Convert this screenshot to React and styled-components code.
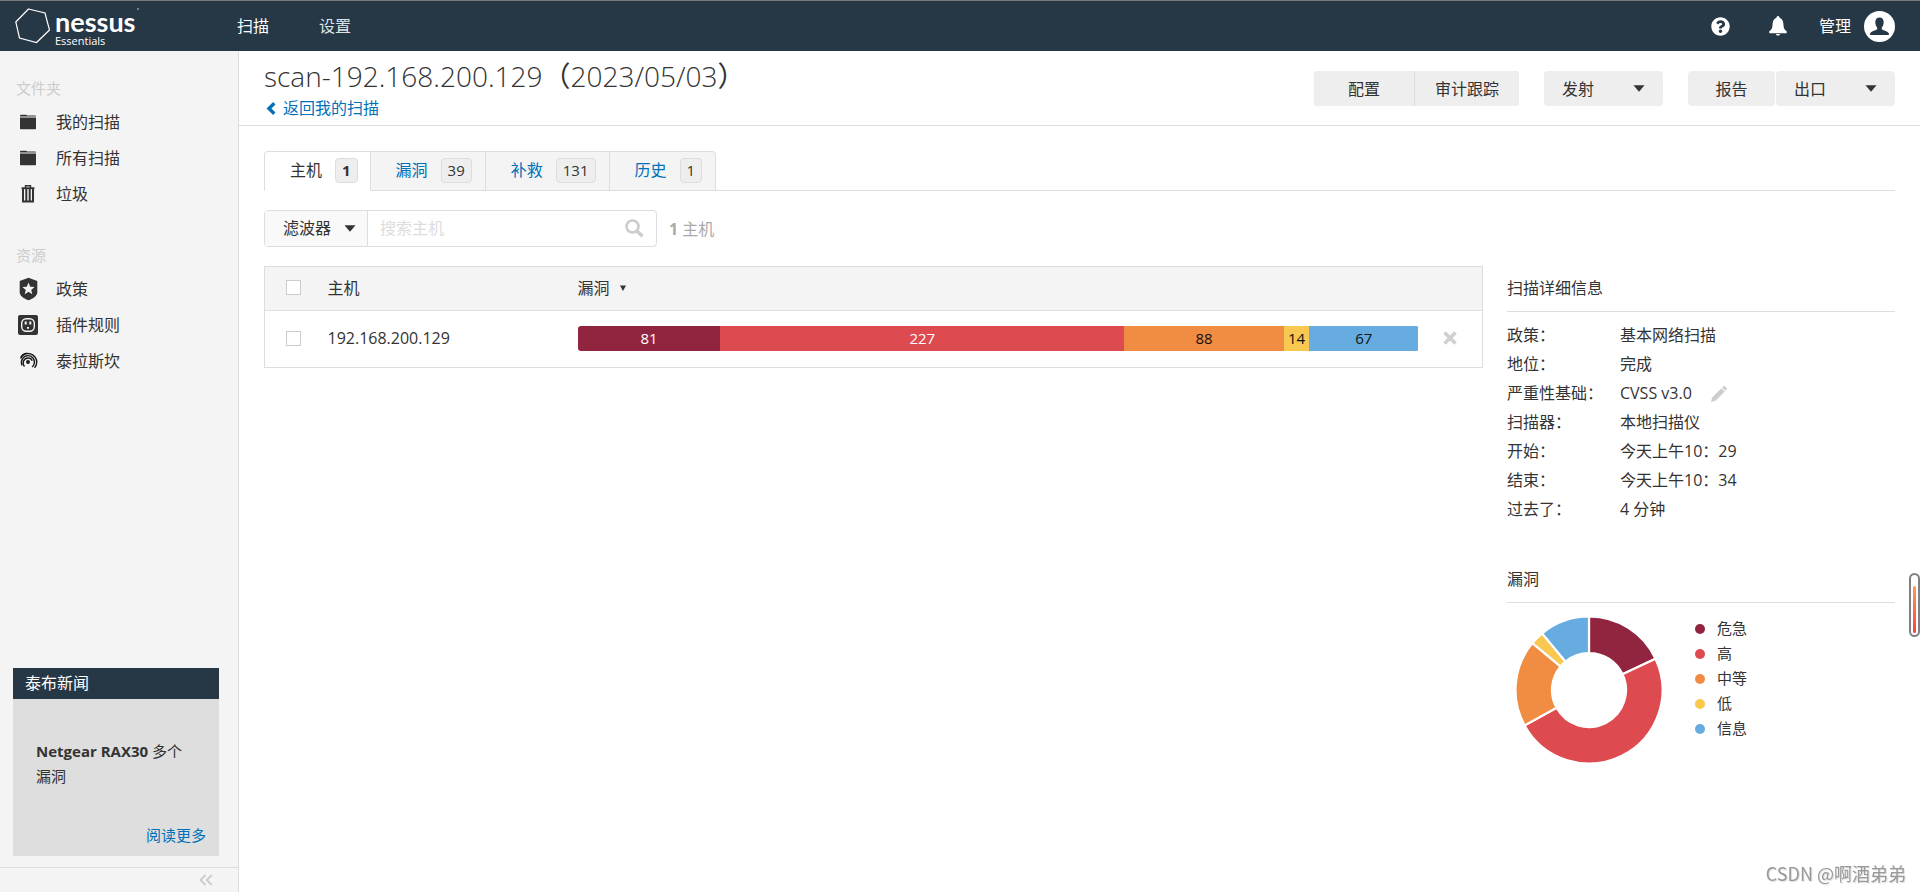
import React from "react";
import styled, { createGlobalStyle, css } from "styled-components";
import { FaQuestionCircle } from "react-icons/fa";

const colors = {
  navy: "#263746",
  text: "#333",
  link: "#0071b9",
  line: "#ddd",
  panel: "#f4f4f4",
  button: "#eee",
  muted: "#ccc",
};

const GlobalStyle = createGlobalStyle`
  *, *::before, *::after { box-sizing: border-box; }
  body {
    margin: 0;
    background: #fff;
    color: ${colors.text};
    font: 16px/24px "Open Sans", "Noto Sans CJK SC", sans-serif;
  }
  button, input { font: inherit; color: inherit; }
  button { cursor: pointer; }
  a { color: ${colors.link}; text-decoration: none; }
  h1, h2, p, dl, dd, ul { margin: 0; padding: 0; font-weight: 400; }
  ul { list-style: none; }
  svg { display: block; flex: none; }
`;

const Page = styled.div`
  display: flex;
  flex-direction: column;
  min-height: 100vh;
`;

/* ---------- top bar ---------- */

const TopBar = styled.header`
  display: flex;
  align-items: center;
  height: 51px;
  padding: 0 25px 0 15px;
  border-top: 1px solid #777;
  background: ${colors.navy};
  color: #fff;
`;

const Brand = styled.a`
  display: flex;
  align-items: center;
  gap: 4px;
  width: 222px;
  color: #fff;
`;

const BrandText = styled.span`
  display: flex;
  flex-direction: column;
  padding-top: 2px;
`;

const BrandName = styled.span`
  display: flex;
  gap: 2px;
  font: 700 27px/27px Lato, sans-serif;
`;

const BrandEdition = styled.span`
  font-size: 11px;
  line-height: 12px;
`;

const MainNav = styled.nav`
  display: flex;
  flex: 1;
  gap: 50px;
`;

const NavLink = styled.a`
  color: ${(p) => (p.$active ? "#fff" : "#dfe3e6")};
`;

const IconButton = styled.button`
  display: flex;
  align-items: center;
  padding: 0;
  border: 0;
  background: none;
`;

const Tools = styled.div`
  display: flex;
  align-items: center;
  gap: 39px;
`;

const Account = styled(IconButton)`
  gap: 13px;
  margin-left: -7px;
`;

/* ---------- sidebar ---------- */

const Body = styled.div`
  display: flex;
  flex: 1;
`;

const Sidebar = styled.aside`
  display: flex;
  flex-direction: column;
  flex: none;
  width: 239px;
  border-right: 1px solid ${colors.line};
  background: ${colors.panel};
`;

const SideGroup = styled.section`
  padding: 25px 0 6px;
`;

const SideTitle = styled.h2`
  padding-left: 16px;
  color: ${colors.muted};
  font-size: 15px;
  line-height: 24px;
  margin-bottom: 4px;
`;

const SideLink = styled.a`
  display: flex;
  align-items: center;
  gap: 18px;
  height: 36px;
  padding-left: 18px;
  color: ${colors.text};
`;

const News = styled.section`
  margin: auto 19px 11px 13px;
  background: #dedede;
`;

const NewsTitle = styled.h2`
  padding: 0 12px;
  background: ${colors.navy};
  color: #fff;
  font-size: 16px;
  line-height: 31px;
`;

const NewsBody = styled.div`
  display: flex;
  flex-direction: column;
  justify-content: space-between;
  height: 157px;
  padding: 40px 13px 8px 23px;
  font-size: 15px;
  line-height: 25px;
`;

const NewsText = styled.p`
  padding-right: 20px;
`;

const NewsMore = styled.a`
  align-self: flex-end;
`;

const SideFooter = styled.div`
  display: flex;
  justify-content: flex-end;
  align-items: center;
  height: 25px;
  padding-right: 25px;
  border-top: 1px solid ${colors.line};
`;

/* ---------- main ---------- */

const Main = styled.main`
  flex: 1;
  min-width: 0;
`;

const PageHead = styled.div`
  display: flex;
  justify-content: space-between;
  align-items: flex-start;
  height: 75px;
  padding: 0 25px;
  border-bottom: 1px solid ${colors.line};
`;

const Title = styled.h1`
  padding: 6px 0 1px;
  font-size: 28px;
  line-height: 38px;
  font-weight: 300;
`;

const Bracket = styled.span`
  font-weight: 400;
`;

const BackLink = styled.a`
  display: inline-flex;
  align-items: center;
  gap: 7px;
  padding-left: 2px;
`;

const Actions = styled.div`
  display: flex;
  gap: 25px;
  padding-top: 20px;
`;

const ButtonGroup = styled.div`
  display: flex;
  gap: 1px;
  border-radius: 4px;
  overflow: hidden;
  background: ${(p) => (p.$joined ? colors.line : "none")};
`;

const ActionButton = styled.button`
  display: flex;
  align-items: center;
  justify-content: ${(p) => (p.$menu ? "space-between" : "center")};
  width: ${(p) => p.$width}px;
  height: 35px;
  padding: 0 18px;
  border: 0;
  border-radius: ${(p) => (p.$flat ? 0 : 4)}px;
  background: ${colors.button};
  white-space: nowrap;
`;

const Content = styled.div`
  padding: 25px;
`;

const Tabs = styled.div`
  display: flex;
  height: 40px;
  border-bottom: 1px solid ${colors.line};
`;

const Tab = styled.button`
  display: flex;
  align-items: center;
  gap: 13px;
  height: 40px;
  padding: 0 13px 2px 25px;
  border: 1px solid ${colors.line};
  border-left-width: 0;
  background: ${colors.panel};
  color: ${colors.link};
  &:first-child {
    border-left-width: 1px;
    border-top-left-radius: 4px;
  }
  &:last-child { border-top-right-radius: 4px; }
  ${(p) =>
    p.$active &&
    css`
      padding-right: 12px;
      border-bottom-color: #fff;
      background: #fff;
      color: ${colors.text};
    `}
`;

const Badge = styled.span`
  height: 25px;
  padding: 0 6px;
  border: 1px solid ${colors.line};
  border-radius: 4px;
  background: ${colors.button};
  color: ${colors.text};
  font-size: 15px;
  line-height: 23px;
  font-weight: ${(p) => (p.$strong ? 700 : 400)};
`;

const FilterRow = styled.div`
  display: flex;
  align-items: center;
  gap: 12px;
  margin: 19px 0;
  color: #aaa;
`;

const SearchBox = styled.div`
  display: flex;
  align-items: stretch;
  width: 393px;
  height: 37px;
  border: 1px solid ${colors.line};
  border-radius: 4px;
  overflow: hidden;
`;

const FilterButton = styled.button`
  display: flex;
  align-items: center;
  justify-content: space-between;
  width: 103px;
  padding: 0 11px 1px 18px;
  border: 0;
  border-right: 1px solid ${colors.line};
  background: #f9f9f9;
  color: ${colors.text};
  white-space: nowrap;
`;

const SearchInput = styled.input`
  flex: 1;
  min-width: 0;
  padding: 0 12px 1px;
  border: 0;
  outline: 0;
  color: ${colors.text};
  &::placeholder { color: #ddd; opacity: 1; }
`;

const SearchButton = styled(IconButton)`
  padding: 0 12px 1px 0;
`;

const Columns = styled.div`
  display: grid;
  grid-template-columns: minmax(0, 1fr) 388px;
  gap: 24px;
  align-items: start;
`;

const HostTable = styled.table`
  width: 100%;
  border: 1px solid ${colors.line};
  border-collapse: collapse;
  table-layout: fixed;
  th, td {
    height: 57px;
    padding: 0 0 2px;
    text-align: left;
    font-weight: 400;
  }
  th {
    height: 44px;
    border-bottom: 1px solid ${colors.line};
    background: ${colors.panel};
  }
`;

const Column = styled.col`
  width: ${(p) => p.$width};
`;

const CheckCell = styled.div`
  display: flex;
  padding-left: 21px;
`;

const Checkbox = styled.input.attrs({ type: "checkbox" })`
  appearance: none;
  width: 15px;
  height: 15px;
  margin: 0;
  border: 1px solid ${colors.muted};
  background: #fff;
`;

const SortHead = styled.span`
  display: flex;
  align-items: center;
  gap: 10px;
`;

const StackedBar = styled.div`
  display: flex;
  height: 25px;
  border-radius: 3px;
  overflow: hidden;
`;

const Segment = styled.span`
  background: ${(p) => p.$color};
  color: ${(p) => (p.$light ? "#fff" : "#111")};
  font-size: 15px;
  line-height: 25px;
  text-align: center;
`;

const RemoveButton = styled(IconButton)`
  margin: 0 auto;
`;

const Panel = styled.section`
  margin-bottom: 33px;
`;

const PanelTitle = styled.h2`
  padding: 10px 0 11px;
  margin-bottom: 9px;
  border-bottom: 1px solid ${colors.line};
  font-size: 16px;
  line-height: 24px;
`;

const Details = styled.dl`
  display: grid;
  grid-template-columns: 113px 1fr;
  line-height: 29px;
`;

const DetailValue = styled.dd`
  display: flex;
  align-items: center;
  gap: 19px;
`;

const ChartRow = styled.div`
  display: flex;
  gap: 32px;
  padding: 4px 0 0 8px;
`;

const LegendItem = styled.li`
  display: flex;
  align-items: center;
  gap: 12px;
  font-size: 15px;
  line-height: 25px;
  &::before {
    content: "";
    width: 10px;
    height: 10px;
    border-radius: 50%;
    background: ${(p) => p.$color};
  }
`;

/* ---------- overlays ---------- */

const Gauge = styled.div`
  position: fixed;
  right: 0;
  top: 573px;
  width: 11px;
  height: 64px;
  padding: 11px 2px 2px;
  border: 2px solid #808080;
  border-radius: 6px;
  background: #fff;
`;

const GaugeLevel = styled.div`
  width: 3px;
  height: 100%;
  border-radius: 2px;
  background: linear-gradient(#ff9a55, #ff4040);
`;

const Watermark = styled.div`
  position: fixed;
  right: 14px;
  bottom: 6px;
  color: #999;
  font: 18px/26px "Noto Sans CJK SC", sans-serif;
  text-shadow: 1px 1px 1px #ddd;
`;

/* ---------- icons ---------- */

const LogoMark = () => (
  <svg width="36" height="36" viewBox="0 0 36 36" fill="none" stroke="#fff" strokeWidth="1.2">
    <path d="M13.5 1 30 5 34.5 22 21.5 34.5 4.5 30 .8 14Z" />
  </svg>
);

const RegisteredDot = () => (
  <svg width="2" height="2" viewBox="0 0 2 2" fill="#8a949c">
    <circle cx="1" cy="1" r="1" />
  </svg>
);

const ChevronIcon = () => (
  <svg width="10" height="13" viewBox="0 0 10 13" fill="none" stroke={colors.link} strokeWidth="3.4">
    <path d="M8.300 1.300 3 6.500l5.300 5.200" />
  </svg>
);

const BellIcon = () => (
  <svg width="18" height="20" viewBox="0 0 18 20" fill="#fff">
    <path d="M9 0c1 0 1.500.8 1.500 1.700 2.800 1 3.800 3.300 3.900 6.200.1 3.600.8 5.600 3.300 7.400v1.900H.3v-1.900c2.500-1.800 3.200-3.800 3.300-7.400.1-2.900 1.100-5.200 3.900-6.200C7.500.8 8 0 9 0Z" />
    <path d="M6.800 18h4.400c-.4 1.100-1.200 1.600-2.200 1.600s-1.800-.5-2.200-1.600Z" />
  </svg>
);

const AvatarIcon = () => (
  <svg width="31" height="31" viewBox="0 0 31 31">
    <circle cx="15.500" cy="15.500" r="15.500" fill="#fff" />
    <path
      fill={colors.navy}
      d="M15.500 6.500c2.700 0 4.200 1.900 4.200 4.700 0 2-.8 4-1.900 5.200v1.800c.5 1 6.600 1.900 7 4.300l.2 1.500H6l.2-1.500c.4-2.400 6.500-3.300 7-4.300v-1.800c-1.100-1.200-1.900-3.200-1.900-5.200 0-2.800 1.500-4.700 4.200-4.700Z"
    />
  </svg>
);

const Caret = () => (
  <svg width="12" height="7" viewBox="0 0 12 7" fill={colors.text}>
    <path d="M.5.300h11L6 6.700Z" />
  </svg>
);

const SortCaret = () => (
  <svg width="6" height="6" viewBox="0 0 6 6" fill={colors.text}>
    <path d="M0 .5h6L3 6Z" />
  </svg>
);

const FolderIcon = () => (
  <svg width="20" height="20" viewBox="0 0 20 20" fill={colors.text}>
    <path d="M2 4.500V3.700c0-.5.400-.9.900-.9h5.200c.5 0 .7.300.9.700h8.100c.5 0 .9.300.9.800v.2Z" />
    <path d="M2 5.500h16v10.800c0 .6-.4 1-1 1H3c-.6 0-1-.4-1-1Z" />
  </svg>
);

const TrashIcon = () => (
  <svg width="20" height="20" viewBox="0 0 20 20" fill="none" stroke={colors.text}>
    <path d="M7.500 4V1.700h5V4" strokeWidth="1.400" />
    <path d="M3.500 4.200h13" strokeWidth="1.800" />
    <path d="M5 5v12.500h10V5M8.300 5v13M11.700 5v13" strokeWidth="2" />
  </svg>
);

const ShieldIcon = () => (
  <svg width="20" height="24" viewBox="0 0 20 24">
    <path fill={colors.text} d="M10.500.8 19.300 4v11.500c0 3.700-5 6.500-8.800 7.800-3.800-1.300-8.800-4.100-8.800-7.800V4Z" />
    <path fill="#f4f4f4" d="m10.500 5.600 1.700 4.100 4.400.3-3.400 2.900 1.100 4.300-3.800-2.400-3.800 2.400 1.100-4.300L4.400 10l4.400-.3Z" />
  </svg>
);

const PluginIcon = () => (
  <svg width="20" height="20" viewBox="0 0 20 20">
    <rect width="20" height="20" rx="2" fill={colors.text} />
    <rect x="3.700" y="3.700" width="12.600" height="12.600" rx="4.500" fill="none" stroke="#f4f4f4" strokeWidth="1.400" />
    <path d="M7.700 6.500v3M12.300 6.500v3M10 12v1.800" stroke="#f4f4f4" strokeWidth="2" />
  </svg>
);

const TerrascanIcon = () => (
  <svg width="20" height="20" viewBox="0 0 20 20" fill="none" stroke="#1a1a1a" strokeWidth="1.400">
    <circle cx="10" cy="11" r="2" fill="#1a1a1a" stroke="none" />
    <path d="M6.500 15.500C3.800 12.300 5.500 7 10 7c1.700 0 3.500 1 4.200 2.700" />
    <path d="M4 14.500C2 9.500 5.300 4.600 10 4.600c4 0 6.500 3.400 6.400 6.800-.1 2-1 3.300-2.200 4.500" />
    <path d="M2.500 7.500C5 2.500 9.500 2 12.500 2.900c3.800 1.100 6.500 5 6.200 8.600-.1 2.300-1 4-2.200 5.300" />
    <path d="M2.800 6c1-1.700 3.200-3.200 5.700-3.700" />
  </svg>
);

const CollapseIcon = () => (
  <svg width="14" height="12" viewBox="0 0 14 12" fill="none" stroke="#ccc" strokeWidth="1.800">
    <path d="M6.500 1 1.500 6l5 5M12.800 1l-5 5 5 5" />
  </svg>
);

const SearchIcon = () => (
  <svg width="19" height="19" viewBox="0 0 19 19" fill="none" stroke="#ccc">
    <circle cx="7.500" cy="7.500" r="6" strokeWidth="2.600" />
    <path d="m12 12 5.500 5.200" strokeWidth="3.400" />
  </svg>
);

const RemoveIcon = () => (
  <svg width="14" height="14" viewBox="0 0 14 14" stroke="#d0d0d0" strokeWidth="3.700">
    <path d="m1.500 1.500 11 11M12.500 1.500l-11 11" />
  </svg>
);

const PencilIcon = () => (
  <svg width="16" height="16" viewBox="0 0 16 16" fill="#ccc">
    <path d="M0 16l1.200-4.500L10.500 2.200l3.300 3.300L4.500 14.800ZM11.300 1.400 12.300.500c.5-.6 1.300-.6 1.800 0L15.500 1.900c.6.500.6 1.300 0 1.800l-.9 1Z" />
  </svg>
);

/* ---------- data ---------- */

const folders = [
  ["我的扫描", FolderIcon],
  ["所有扫描", FolderIcon],
  ["垃圾", TrashIcon],
];

const resources = [
  ["政策", ShieldIcon],
  ["插件规则", PluginIcon],
  ["泰拉斯坎", TerrascanIcon],
];

const tabs = [
  ["主机", 1],
  ["漏洞", 39],
  ["补救", 131],
  ["历史", 1],
];

const severities = [
  { label: "危急", count: 81, bar: 17, share: 18, color: "#91243e", light: true },
  { label: "高", count: 227, bar: 48, share: 49, color: "#dd4b50", light: true },
  { label: "中等", count: 88, bar: 19, share: 19, color: "#f18c43" },
  { label: "低", count: 14, bar: 3, share: 3, color: "#f8c851" },
  { label: "信息", count: 67, bar: 13, share: 11, color: "#67ace1" },
];

const details = [
  ["政策：", "基本网络扫描"],
  ["地位：", "完成"],
  ["严重性基础：", "CVSS v3.0", true],
  ["扫描器：", "本地扫描仪"],
  ["开始：", "今天上午10：29"],
  ["结束：", "今天上午10：34"],
  ["过去了：", "4 分钟"],
];

function Donut() {
  const outer = 73.500;
  const inner = 37;
  const point = (radius, share) => {
    const angle = (share / 100) * Math.PI * 2;
    return `${radius * Math.sin(angle)} ${-radius * Math.cos(angle)}`;
  };
  let start = 0;
  return (
    <svg width="148" height="148" viewBox="-74 -74 148 148" role="img" aria-label="漏洞">
      {severities.map((s) => {
        const from = start;
        const to = start + s.share;
        start = to;
        return (
          <path
            key={s.label}
            fill={s.color}
            stroke="#fff"
            strokeWidth="2.200"
            d={`M${point(outer, from)}A${outer} ${outer} 0 0 1 ${point(outer, to)}L${point(inner, to)}A${inner} ${inner} 0 0 0 ${point(inner, from)}Z`}
          />
        );
      })}
    </svg>
  );
}

function SideSection({ title, items }) {
  return (
    <SideGroup>
      <SideTitle>{title}</SideTitle>
      {items.map(([label, Icon]) => (
        <SideLink key={label} href="#">
          <Icon />
          {label}
        </SideLink>
      ))}
    </SideGroup>
  );
}

export default function App() {
  return (
    <Page>
      <GlobalStyle />
      <TopBar>
        <Brand href="#">
          <LogoMark />
          <BrandText>
            <BrandName>nessus<RegisteredDot /></BrandName>
            <BrandEdition>Essentials</BrandEdition>
          </BrandText>
        </Brand>
        <MainNav>
          <NavLink href="#" $active>扫描</NavLink>
          <NavLink href="#">设置</NavLink>
        </MainNav>
        <Tools>
          <IconButton aria-label="帮助"><FaQuestionCircle size={19} color="#fff" /></IconButton>
          <IconButton aria-label="通知"><BellIcon /></IconButton>
          <Account>管理<AvatarIcon /></Account>
        </Tools>
      </TopBar>

      <Body>
        <Sidebar>
          <SideSection title="文件夹" items={folders} />
          <SideSection title="资源" items={resources} />
          <News>
            <NewsTitle>泰布新闻</NewsTitle>
            <NewsBody>
              <NewsText><b>Netgear RAX30</b> 多个漏洞</NewsText>
              <NewsMore href="#">阅读更多</NewsMore>
            </NewsBody>
          </News>
          <SideFooter>
            <IconButton aria-label="收起"><CollapseIcon /></IconButton>
          </SideFooter>
        </Sidebar>

        <Main>
          <PageHead>
            <div>
              <Title>
                scan-192.168.200.129<Bracket>（</Bracket>2023/05/03<Bracket>）</Bracket>
              </Title>
              <BackLink href="#"><ChevronIcon />返回我的扫描</BackLink>
            </div>
            <Actions>
              <ButtonGroup $joined>
                <ActionButton $width={100} $flat>配置</ActionButton>
                <ActionButton $width={104} $flat>审计跟踪</ActionButton>
              </ButtonGroup>
              <ActionButton $width={119} $menu>发射<Caret /></ActionButton>
              <ButtonGroup>
                <ActionButton $width={87}>报告</ActionButton>
                <ActionButton $width={119} $menu>出口<Caret /></ActionButton>
              </ButtonGroup>
            </Actions>
          </PageHead>

          <Content>
            <Tabs role="tablist">
              {tabs.map(([label, count], i) => (
                <Tab key={label} role="tab" aria-selected={i === 0} $active={i === 0}>
                  {label}
                  <Badge $strong={i === 0}>{count}</Badge>
                </Tab>
              ))}
            </Tabs>

            <FilterRow>
              <SearchBox>
                <FilterButton>滤波器<Caret /></FilterButton>
                <SearchInput type="text" placeholder="搜索主机" aria-label="搜索主机" />
                <SearchButton aria-label="搜索"><SearchIcon /></SearchButton>
              </SearchBox>
              <span><b>1</b> 主机</span>
            </FilterRow>

            <Columns>
              <HostTable>
                <colgroup>
                  <Column $width="63px" />
                  <Column $width="250px" />
                  <Column $width="auto" />
                  <Column $width="64px" />
                </colgroup>
                <thead>
                  <tr>
                    <th><CheckCell><Checkbox aria-label="全选" /></CheckCell></th>
                    <th>主机</th>
                    <th><SortHead>漏洞<SortCaret /></SortHead></th>
                    <th />
                  </tr>
                </thead>
                <tbody>
                  <tr>
                    <td><CheckCell><Checkbox aria-label="192.168.200.129" /></CheckCell></td>
                    <td>192.168.200.129</td>
                    <td>
                      <StackedBar>
                        {severities.map((s) => (
                          <Segment key={s.label} $color={s.color} $light={s.light} style={{ width: `${s.bar}%` }}>
                            {s.count}
                          </Segment>
                        ))}
                      </StackedBar>
                    </td>
                    <td><RemoveButton aria-label="删除"><RemoveIcon /></RemoveButton></td>
                  </tr>
                </tbody>
              </HostTable>

              <div>
                <Panel>
                  <PanelTitle>扫描详细信息</PanelTitle>
                  <Details>
                    {details.map(([label, value, editable]) => (
                      <React.Fragment key={label}>
                        <dt>{label}</dt>
                        <DetailValue>
                          {value}
                          {editable && <IconButton aria-label="编辑"><PencilIcon /></IconButton>}
                        </DetailValue>
                      </React.Fragment>
                    ))}
                  </Details>
                </Panel>
                <Panel>
                  <PanelTitle>漏洞</PanelTitle>
                  <ChartRow>
                    <Donut />
                    <ul>
                      {severities.map((s) => (
                        <LegendItem key={s.label} $color={s.color}>{s.label}</LegendItem>
                      ))}
                    </ul>
                  </ChartRow>
                </Panel>
              </div>
            </Columns>
          </Content>
        </Main>
      </Body>

      <Gauge><GaugeLevel /></Gauge>
      <Watermark>CSDN @啊酒弟弟</Watermark>
    </Page>
  );
}
